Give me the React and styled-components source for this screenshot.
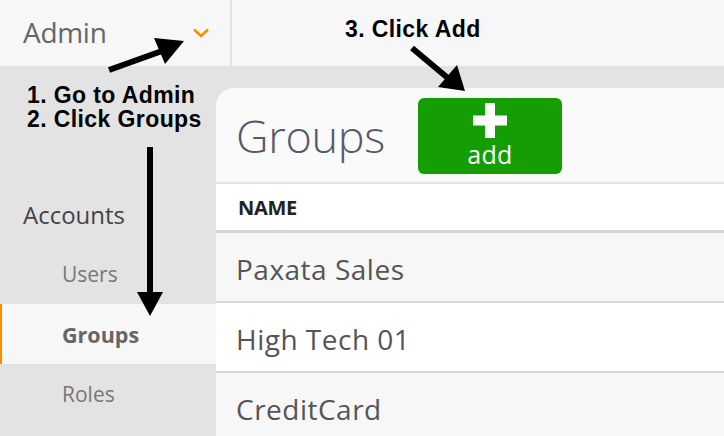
import React from "react";
import styled, { createGlobalStyle } from "styled-components";

const Global = createGlobalStyle`
  html, body { margin: 0; padding: 0; }
  body {
    width: 724px;
    height: 436px;
    overflow: hidden;
    background: #e3e3e3;
    font-family: "Open Sans", "Liberation Sans", sans-serif;
  }
`;

const Page = styled.div`
  position: relative;
  width: 724px;
  height: 436px;
  display: flex;
  flex-direction: column;
  background: #e3e3e3;
  overflow: hidden;
`;

const TopBar = styled.header`
  height: 66px;
  flex: none;
  display: flex;
  background: #f7f7f7;
`;

const AdminMenu = styled.div`
  width: 232px;
  box-sizing: border-box;
  border-right: 2px solid #e3e3e3;
  display: flex;
  align-items: center;
  justify-content: space-between;
  padding: 0 21px 0 23px;
  font-size: 28px;
  color: #666;
  letter-spacing: -0.3px;
  span { margin-top: -2px; }
`;

const Body = styled.div`
  flex: 1;
  display: flex;
  min-height: 0;
`;

const Sidebar = styled.nav`
  width: 216px;
  flex: none;
  padding-top: 118px;
  display: flex;
  flex-direction: column;
`;

const SectionTitle = styled.div`
  height: 60px;
  display: flex;
  align-items: center;
  padding-left: 23px;
  font-size: 24px;
  color: #444;
`;

const NavItem = styled.div`
  height: 60px;
  display: flex;
  align-items: center;
  box-sizing: border-box;
  font-size: ${(p) => (p.$active ? "21.5px" : "21px")};
  color: ${(p) => (p.$active ? "#666" : "#777")};
  font-weight: ${(p) => (p.$active ? 700 : 400)};
  background: ${(p) => (p.$active ? "#f7f7f7" : "transparent")};
  border-left: 2px solid ${(p) => (p.$active ? "#ff8a00" : "transparent")};
  padding-left: 60px;
`;

const Main = styled.main`
  flex: 1;
  margin-top: 22px;
  background: #fafafa;
  border-top-left-radius: 18px;
  display: flex;
  flex-direction: column;
  overflow: hidden;
`;

const PanelHeader = styled.div`
  height: 94px;
  flex: none;
  display: flex;
  align-items: center;
  gap: 33px;
  padding-left: 20px;
  border-bottom: 2px solid #e3e3e3;
`;

const Title = styled.h1`
  margin: 0;
  font-size: 45px;
  font-weight: 300;
  color: #555a6b;
  letter-spacing: -0.3px;
`;

const AddButton = styled.button`
  width: 144px;
  height: 76px;
  margin-top: 2px;
  border: none;
  border-radius: 6px;
  background: #149e03;
  color: #fff;
  display: flex;
  flex-direction: column;
  align-items: center;
  padding: 5px 0 0;
  box-sizing: border-box;
  font-family: "Open Sans", sans-serif;
  font-size: 25px;
  line-height: 32px;
  letter-spacing: 0.3px;
  cursor: pointer;
`;

const TableHead = styled.div`
  height: 46px;
  flex: none;
  display: flex;
  align-items: center;
  padding-left: 22px;
  background: #fff;
  border-bottom: 3px solid #d6d6d6;
  font-size: 20px;
  font-weight: 700;
  color: #222;
  letter-spacing: -0.3px;
`;

const Row = styled.div`
  height: 68px;
  flex: none;
  display: flex;
  align-items: center;
  padding-left: 20px;
  padding-top: 3px;
  box-sizing: border-box;
  background: ${(p) => (p.$alt ? "#fff" : "#f7f7f7")};
  border-top: ${(p) => (p.$first ? "none" : "2px solid #d9d9d9")};
  height: ${(p) => (p.$first ? "68px" : "70px")};
  font-size: 28px;
  letter-spacing: 0.5px;
  color: #555;
`;

const Overlay = styled.svg`
  position: absolute;
  left: 0;
  top: 0;
  pointer-events: none;
`;

const Note = styled.div`
  position: absolute;
  left: ${(p) => p.$x}px;
  top: ${(p) => p.$y}px;
  font-family: "Liberation Sans", Arial, sans-serif;
  font-weight: 700;
  font-size: 23px;
  line-height: 24px;
  letter-spacing: 0.4px;
  color: #000;
  white-space: nowrap;
`;

const Chevron = () => (
  <svg width="16" height="10" viewBox="0 0 16 10">
    <polyline points="1,1.5 8,8 15,1.5" fill="none" stroke="#ff8a00" strokeWidth="2.4" />
  </svg>
);

const Plus = () => (
  <svg width="34" height="35" viewBox="0 0 34 35">
    <rect x="12" y="0" width="10" height="35" fill="#fff" />
    <rect x="0" y="12.5" width="34" height="10" fill="#fff" />
  </svg>
);

export default function App() {
  const groups = ["Paxata Sales", "High Tech 01", "CreditCard"];
  return (
    <Page>
      <Global />
      <TopBar>
        <AdminMenu>
          <span>Admin</span>
          <Chevron />
        </AdminMenu>
      </TopBar>
      <Body>
        <Sidebar>
          <SectionTitle>Accounts</SectionTitle>
          <NavItem>Users</NavItem>
          <NavItem $active>Groups</NavItem>
          <NavItem>Roles</NavItem>
        </Sidebar>
        <Main>
          <PanelHeader>
            <Title>Groups</Title>
            <AddButton>
              <Plus />
              <span>add</span>
            </AddButton>
          </PanelHeader>
          <TableHead>NAME</TableHead>
          {groups.map((g, i) => (
            <Row key={g} $first={i === 0} $alt={i % 2 === 1}>
              {g}
            </Row>
          ))}
        </Main>
      </Body>

      <Overlay width="724" height="436" viewBox="0 0 724 436">
        <line x1="109" y1="70" x2="162" y2="51" stroke="#000" strokeWidth="6" />
        <polygon points="154,38 184,41 165,64" fill="#000" />
        <line x1="150" y1="147" x2="150" y2="295" stroke="#000" strokeWidth="6" />
        <polygon points="137,292 163,292 150,316" fill="#000" />
        <line x1="412" y1="48" x2="449" y2="79" stroke="#000" strokeWidth="6" />
        <polygon points="438,87 465,91 457,65" fill="#000" />
      </Overlay>
      <Note $x={27} $y={83}>
        1. Go to Admin
        <br />
        2. Click Groups
      </Note>
      <Note $x={345} $y={17}>3. Click Add</Note>
    </Page>
  );
}
